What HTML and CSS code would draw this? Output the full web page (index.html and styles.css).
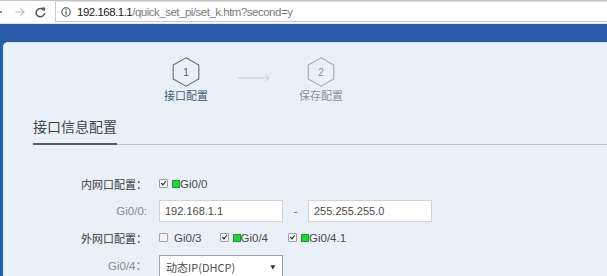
FILE: index.html
```html
<!DOCTYPE html>
<html lang="zh-CN">
<head>
<meta charset="utf-8">
<title>接口信息配置</title>
<link rel="stylesheet" href="styles.css">
</head>
<body>
<div class="toolbar">
  <svg class="nav back" width="12" height="10" viewBox="0 0 12 10"><path d="M11 5H1M5 1L1 5l4 4" fill="none" stroke="#666" stroke-width="1.3"/></svg>
  <svg class="nav fwd" width="10" height="10" viewBox="0 0 10 10"><path d="M0.5 5H9M5.5 1.5L9 5l-3.5 3.5" fill="none" stroke="#bbb" stroke-width="1.2"/></svg>
  <svg class="nav reload" width="11" height="11" viewBox="0 0 11 11"><path d="M8.9 3.3A4.2 4.2 0 1 0 9.6 6" fill="none" stroke="#555" stroke-width="1.5"/><path d="M6.4 0.6H10V4.2Z" fill="#555"/></svg>
  <div class="urlbox">
    <svg class="info" width="10" height="10" viewBox="0 0 10 10"><circle cx="5" cy="5" r="4.2" fill="none" stroke="#444" stroke-width="1.1"/><path d="M5 4.2V7.6" stroke="#444" stroke-width="1.2"/><circle cx="5" cy="2.8" r="0.7" fill="#444"/></svg>
    <span class="url"><span class="host">192.168.1.1</span>/quick_set_pi/set_k.htm?second=y</span>
  </div>
</div>
<div class="bluebar"></div>
<div class="page">
  <div class="panel">
    <div class="stepper">
      <div class="step active">
        <svg class="hex" width="28" height="30" viewBox="0 0 28 30"><polygon points="14,0.8 26.8,8 26.8,22 14,29.2 1.2,22 1.2,8" fill="none" stroke="#5c6d80" stroke-width="1.1"/><text x="14" y="19" text-anchor="middle">1</text></svg>
        <span class="step-label">接口配置</span>
      </div>
      <svg class="arrow" width="32" height="8" viewBox="0 0 32 8"><path d="M0 4H31M27.5 1L31 4l-3.5 3" fill="none" stroke="#c4cbd3" stroke-width="1"/></svg>
      <div class="step">
        <svg class="hex" width="28" height="30" viewBox="0 0 28 30"><polygon points="14,0.8 26.8,8 26.8,22 14,29.2 1.2,22 1.2,8" fill="none" stroke="#a3aab2" stroke-width="1.1"/><text x="14" y="19" text-anchor="middle">2</text></svg>
        <span class="step-label">保存配置</span>
      </div>
    </div>
    <div class="section-head"><span class="section-title">接口信息配置</span></div>
    <div class="form">
      <div class="label cjk">内网口配置：</div>
      <div class="field">
        <span class="cb checked"></span><span class="port"><span class="led"></span>Gi0/0</span>
      </div>
      <div class="label">Gi0/0:</div>
      <div class="field">
        <span class="input">192.168.1.1</span><span class="dash">-</span><span class="input">255.255.255.0</span>
      </div>
      <div class="label cjk">外网口配置：</div>
      <div class="field">
        <span class="cb"></span><span class="port plain">Gi0/3</span>
        <span class="cb checked"></span><span class="port"><span class="led"></span>Gi0/4</span>
        <span class="cb checked"></span><span class="port"><span class="led"></span>Gi0/4.1</span>
      </div>
      <div class="label">Gi0/4：</div>
      <div class="field">
        <span class="select"><span>动态IP(DHCP)</span><span class="caret">▼</span></span>
      </div>
    </div>
  </div>
</div>
</body>
</html>
```
FILE: styles.css
```css
html, body {
  margin: 0;
  padding: 0;
}
body {
  width: 607px;
  height: 276px;
  overflow: hidden;
  background: #2a5ca9;
  font-family: "Liberation Sans", "Noto Sans CJK SC", sans-serif;
}
.toolbar {
  height: 24px;
  box-sizing: border-box;
  border-top: 1px solid #c4c4c4;
  border-bottom: 1px solid #dfe6ee;
  background: #ffffff;
  display: flex;
  align-items: center;
}
.nav { flex: none; }
.back { margin-left: -9px; }
.fwd { margin-left: 12px; }
.reload { margin-left: 10px; }
.urlbox {
  margin-left: 9px;
  flex: 1;
  align-self: flex-start;
  height: 21px;
  box-sizing: border-box;
  border: 1px solid #c9c9c9;
  border-top-color: #e2e2e2;
  border-right: none;
  display: flex;
  align-items: center;
  padding-left: 5px;
}
.info { flex: none; }
.url {
  margin-left: 6px;
  font-size: 11.5px;
  letter-spacing: -0.5px;
  color: #7a7a7a;
  white-space: nowrap;
}
.host { color: #1a1a1a; }
.bluebar {
  height: 17px;
  background: #2a5ca9;
  border-bottom: 1px solid #244f90;
}
.page {
  padding-left: 3px;
}
.panel {
  height: 240px;
  background: #eaf0f8;
  border-top: 1px solid #d6eef8;
  border-top-left-radius: 5px;
  overflow: hidden;
}
.stepper {
  display: flex;
  align-items: flex-start;
  padding-top: 14px;
  padding-left: 160px;
}
.step {
  width: 46px;
  display: flex;
  flex-direction: column;
  align-items: center;
}
.hex text {
  font-family: "Liberation Sans", sans-serif;
  font-size: 10px;
  fill: #555;
}
.step-label {
  margin-top: 2px;
  font-family: "Noto Sans CJK SC", sans-serif;
  font-size: 11px;
  line-height: 13px;
  color: #8a9097;
  white-space: nowrap;
}
.step.active .step-label { color: #3f5c7c; }
.step:not(.active) .hex text { fill: #8a9097; }
.arrow {
  flex: none;
  margin: 17px 28px 0 29px;
}
.section-head {
  margin: 14px 0 0 30px;
  border-bottom: 1px solid #b6bfc8;
  height: 28px;
}
.section-title {
  display: inline-block;
  font-family: "Noto Sans CJK SC", sans-serif;
  font-size: 14px;
  line-height: 20px;
  color: #3f454b;
  padding-bottom: 7px;
  border-bottom: 2px solid #4a5e6e;
}
.form {
  margin-top: 25px;
  display: grid;
  grid-template-columns: 144px 1fr;
  grid-auto-rows: 27px;
  column-gap: 12px;
}
.label {
  display: flex;
  align-items: center;
  justify-content: flex-end;
  font-size: 11.5px;
  color: #868b91;
  white-space: nowrap;
}
.label.cjk {
  font-family: "Noto Sans CJK SC", sans-serif;
  font-size: 11px;
  color: #3c3c3c;
}
.field {
  display: flex;
  align-items: center;
}
.cb {
  flex: none;
  width: 7px;
  height: 7px;
  border: 1px solid #a0a0a0;
  background: #f4f4f4;
  border-radius: 1px;
  position: relative;
}
.cb.checked::after {
  content: "";
  position: absolute;
  left: 2px;
  top: 0px;
  width: 2px;
  height: 4px;
  border-right: 1.5px solid #222;
  border-bottom: 1.5px solid #222;
  transform: rotate(40deg);
}
.port {
  display: flex;
  align-items: center;
  margin-left: 4px;
  margin-right: 20px;
  font-size: 11.5px;
  color: #4a4a4a;
}
.port.plain { margin-left: 6px; margin-right: 18px; }
.led {
  width: 6px;
  height: 6px;
  background: #25d23a;
  border: 1px solid #1a9a2a;
}
.input {
  width: 124px;
  height: 22px;
  box-sizing: border-box;
  background: #fff;
  border: 1px solid #cfd3d8;
  padding-left: 5px;
  display: flex;
  align-items: center;
  font-size: 11px;
  color: #4a4a4a;
}
.dash {
  width: 25px;
  text-align: center;
  font-size: 11px;
  color: #666;
}
.select {
  width: 124px;
  height: 23px;
  box-sizing: border-box;
  background: #fff;
  border: 1px solid #9da3a9;
  padding: 0 7px 0 6px;
  display: flex;
  align-items: center;
  justify-content: space-between;
  font-family: "Noto Sans CJK SC", sans-serif;
  font-size: 11px;
  color: #4a4a4a;
  margin-top: 4px;
}
.caret {
  font-size: 6px;
  color: #333;
  font-family: "DejaVu Sans", sans-serif;
}
```
